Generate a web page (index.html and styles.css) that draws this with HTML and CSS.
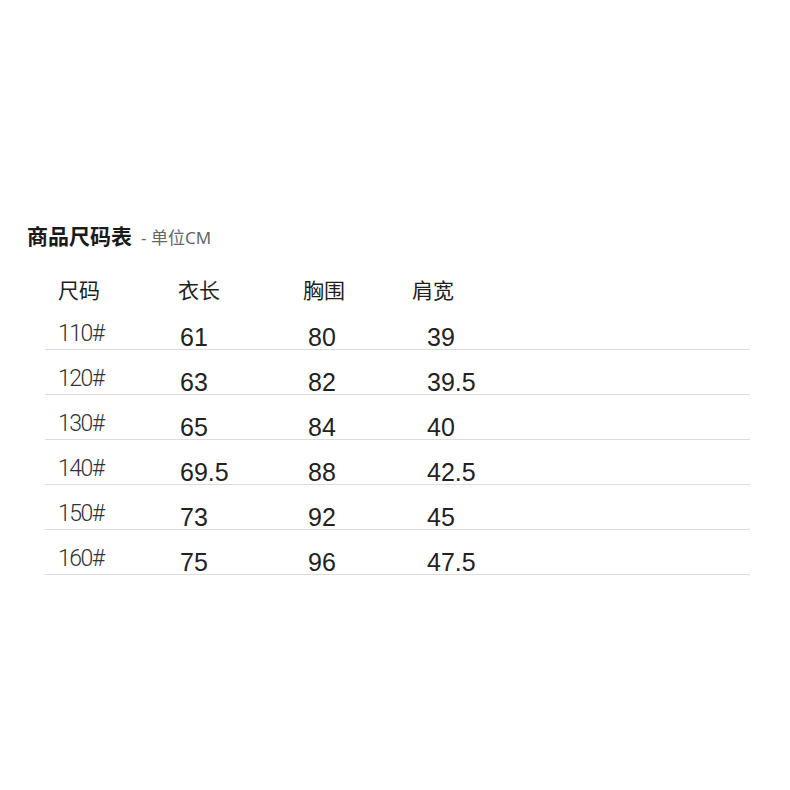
FILE: index.html
```html
<!DOCTYPE html>
<html lang="zh">
<head>
<meta charset="utf-8">
<title>商品尺码表</title>
<link rel="stylesheet" href="styles.css">
</head>
<body>
<div class="page">
  <div class="title"><span class="main">商品尺码表</span><span class="unit">- 单位CM</span></div>
  <div class="table">
    <div class="head">
      <span class="h1">尺码</span><span class="h2">衣长</span><span class="h3">胸围</span><span class="h4">肩宽</span>
    </div>
    <div class="row"><span class="c1">110#</span><span class="c2">61</span><span class="c3">80</span><span class="c4">39</span></div>
    <div class="row"><span class="c1">120#</span><span class="c2">63</span><span class="c3">82</span><span class="c4">39.5</span></div>
    <div class="row"><span class="c1">130#</span><span class="c2">65</span><span class="c3">84</span><span class="c4">40</span></div>
    <div class="row"><span class="c1">140#</span><span class="c2">69.5</span><span class="c3">88</span><span class="c4">42.5</span></div>
    <div class="row"><span class="c1">150#</span><span class="c2">73</span><span class="c3">92</span><span class="c4">45</span></div>
    <div class="row"><span class="c1">160#</span><span class="c2">75</span><span class="c3">96</span><span class="c4">47.5</span></div>
  </div>
</div>
</body>
</html>
```
FILE: styles.css
```css
html, body {
  margin: 0;
  padding: 0;
  background: #ffffff;
}
body {
  width: 790px;
  height: 790px;
  font-family: "Liberation Sans", "Noto Sans CJK SC", sans-serif;
  color: #222;
}
.page {
  padding-top: 223px;
}
.title {
  padding-left: 27px;
  height: 28px;
  line-height: 28px;
  display: flex;
  align-items: baseline;
  gap: 9px;
}
.title .main {
  font-size: 21px;
  font-weight: 700;
  color: #1a1a1a;
}
.title .unit {
  font-family: "Noto Sans", "Noto Sans CJK SC", sans-serif;
  font-size: 17px;
  color: #666;
}
.table {
  margin-left: 45px;
  width: 705px;
  margin-top: 26px;
}
.head {
  display: flex;
  height: 28px;
  line-height: 28px;
  font-size: 21px;
  color: #1e1e1e;
}
.head span { display: block; }
.h1 { padding-left: 13px; width: 120px; }
.h2 { width: 125px; }
.h3 { width: 109px; }
.row {
  display: flex;
  align-items: center;
  height: 24px;
  line-height: 24px;
  padding-top: 20px;
  border-bottom: 1px solid #dcdcdc;
}
.row span { display: block; }
.c1 {
  padding-left: 13px;
  width: 122px;
  font-family: Roboto, "Liberation Sans", sans-serif;
  font-weight: 300;
  font-size: 23px;
  letter-spacing: -1.5px;
  color: #333;
  margin-bottom: 6px;
}
.c2, .c3, .c4 {
  font-size: 25px;
  color: #222;
}
.c2 { width: 128px; }
.c3 { width: 119px; }
```
